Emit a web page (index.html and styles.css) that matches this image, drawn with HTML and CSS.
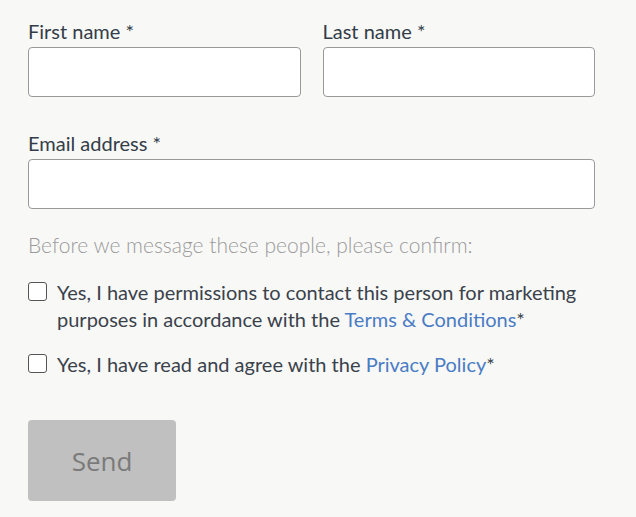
FILE: index.html
```html
<!DOCTYPE html>
<html lang="en">
<head>
  <meta charset="UTF-8" />
  <meta name="viewport" content="width=device-width, initial-scale=1.0" />
  <title>Contact form</title>
  <link rel="stylesheet" href="styles.css">
</head>
<body>

<form class="contact-form">
  <div class="row">
    <div class="field">
      <label for="first">First name *</label>
      <input type="text" id="first" />
    </div>
    <div class="field">
      <label for="last">Last name *</label>
      <input type="text" id="last" />
    </div>
  </div>

  <div class="field field-email">
    <label for="email">Email address *</label>
    <input type="email" id="email" />
  </div>

  <p class="confirm-note">Before we message these people, please confirm:</p>

  <label class="check">
    <span class="box"></span>
    <span>Yes, I have permissions to contact this person for marketing purposes in accordance with the <a href="#">Terms &amp; Conditions</a>*</span>
  </label>
  <label class="check">
    <span class="box"></span>
    <span>Yes, I have read and agree with the <a href="#">Privacy Policy</a>*</span>
  </label>

  <button type="button" class="send" disabled>Send</button>
</form>

</body>
</html>
```

FILE: styles.css
```css
* {
  margin: 0;
  padding: 0;
  box-sizing: border-box;
}

body {
  background: #f8f8f7;
  font-family: Lato, "Open Sans", sans-serif;
  color: #333d47;
}

.contact-form {
  width: 567px;
  margin-left: 28px;
  padding-top: 19px;
}

.row {
  display: grid;
  grid-template-columns: 1fr 1fr;
  gap: 22px;
}

.field label {
  display: block;
  font-size: 20px;
  line-height: 24px;
  margin-bottom: 4px;
}

.field input {
  display: block;
  width: 100%;
  height: 50px;
  border: 1px solid #9a9a9a;
  border-radius: 4px;
  background: #fff;
  outline: none;
}

.field-email {
  margin-top: 34px;
}

.confirm-note {
  margin-top: 23px;
  font-size: 21px;
  line-height: 26px;
  color: #9a9a9a;
  font-weight: 300;
}

.check {
  display: flex;
  gap: 10px;
  font-size: 20px;
  line-height: 27px;
  color: #3a424b;
  margin-top: 21px;
}

.check + .check {
  margin-top: 18px;
}

.box {
  flex: none;
  width: 19px;
  height: 19px;
  margin-top: 3px;
  border: 1px solid #555;
  border-radius: 3px;
  background: #fff;
}

.check a {
  color: #4a7cc4;
  text-decoration: none;
}

.send {
  display: block;
  margin-top: 42px;
  width: 148px;
  height: 81px;
  border: none;
  border-radius: 4px;
  background: #c0c0c0;
  color: #7a7a7a;
  font-family: "Open Sans", sans-serif;
  font-size: 26px;
}
```
